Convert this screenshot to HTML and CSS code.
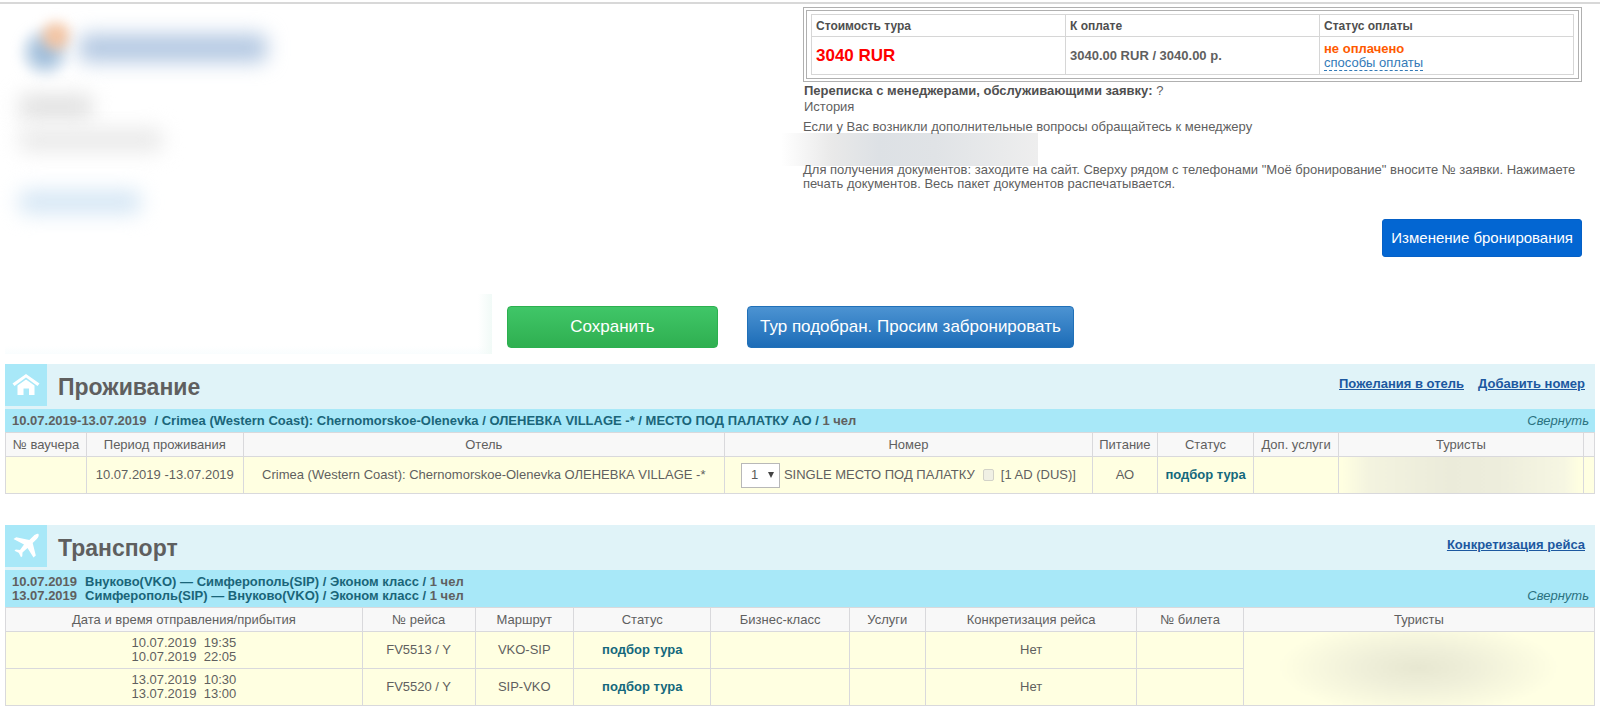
FILE: index.html
```html
<!DOCTYPE html>
<html lang="ru">
<head>
<meta charset="utf-8">
<title>Бронирование</title>
<link rel="stylesheet" href="styles.css">
</head>
<body>
<div class="page">
  <header class="top">
    <div class="agency">
      <div class="logo"><span class="logo-mark"></span><span class="logo-name"></span></div>
      <div class="smudge smudge-a"></div>
      <div class="smudge smudge-b"></div>
      <div class="smudge smudge-link"></div>
    </div>
    <div class="order">
      <div class="pay-box">
        <table class="pay">
          <thead><tr><th>Стоимость тура</th><th>К оплате</th><th>Статус оплаты</th></tr></thead>
          <tbody><tr>
            <td class="cost">3040 RUR</td>
            <td class="due">3040.00 RUR / 3040.00 р.</td>
            <td><div class="unpaid">не оплачено</div><a class="ways" href="#">способы оплаты</a></td>
          </tr></tbody>
        </table>
      </div>
      <div class="talks">
        <div><b>Переписка с менеджерами, обслуживающими заявку:</b> ?</div>
        <div>История</div>
      </div>
      <p class="ask">Если у Вас возникли дополнительные вопросы обращайтесь к менеджеру</p>
      <div class="contact"></div>
      <p>Для получения документов: заходите на сайт. Сверху рядом с телефонами "Моё бронирование" вносите № заявки. Нажимаете печать документов. Весь пакет документов распечатывается.</p>
      <button class="change" type="button">Изменение бронирования</button>
    </div>
  </header>
  <div class="actions">
    <div class="fade"></div>
    <button class="btn save" type="button">Сохранить</button>
    <button class="btn book" type="button">Тур подобран. Просим забронировать</button>
  </div>

  <section class="block">
    <div class="head">
      <span class="icon"><svg width="28" height="24" viewBox="0 0 28 24" fill="#fff"><path d="M14 1 27.500 10.500 25.500 13 14 4.500 2.500 13 .500 10.500Z"/><path d="M14 6.500 22.500 12.500V22H17V15.500H11.500V22H5.500V12.500Z"/></svg></span>
      <h2>Проживание</h2>
      <nav><a href="#">Пожелания в отель</a><a href="#">Добавить номер</a></nav>
    </div>
    <div class="bar">
      <div><span class="grey">10.07.2019-13.07.2019</span><span class="trip">/ Crimea (Western Coast): Chernomorskoe-Olenevka / ОЛЕНЕВКА VILLAGE -* / МЕСТО ПОД ПАЛАТКУ АО / <span class="grey">1 чел</span></span></div>
      <button class="fold" type="button">Свернуть</button>
    </div>
    <table class="grid">
      <colgroup><col class="s1"><col class="s2"><col class="s3"><col class="s4"><col class="s5"><col class="s6"><col class="s7"><col class="s8"><col></colgroup>
      <thead><tr><th>№ ваучера</th><th>Период проживания</th><th>Отель</th><th>Номер</th><th>Питание</th><th>Статус</th><th>Доп. услуги</th><th>Туристы</th><th></th></tr></thead>
      <tbody><tr>
        <td></td>
        <td>10.07.2019 -13.07.2019</td>
        <td>Crimea (Western Coast): Chernomorskoe-Olenevka ОЛЕНЕВКА VILLAGE -*</td>
        <td><div class="room"><span class="pick"><select aria-label="Количество номеров"><option>1</option></select></span><span>SINGLE МЕСТО ПОД ПАЛАТКУ</span><label class="dus"><input type="checkbox" disabled>[1 AD (DUS)]</label></div></td>
        <td>АО</td>
        <td class="status">подбор тура</td>
        <td></td>
        <td class="hidden-a"></td>
        <td></td>
      </tr></tbody>
    </table>
  </section>

  <section class="block">
    <div class="head">
      <span class="icon"><svg width="28" height="26" viewBox="0 0 28 26" fill="#fff"><path d="M26.500 1C25 .400 23 1.600 21.500 3L17.300 7 4.200 4.200 1.500 6 12 11.500 8 17 3.800 16.600 2.500 17.800 6.600 19.800 7 20.300 9 24.300 10.300 23.200 10.500 19.500 15.500 15 21.500 24.500 23.800 22.500 20.700 10 24.800 6C26.300 4.500 27.200 2.500 26.500 1Z"/></svg></span>
      <h2>Транспорт</h2>
      <nav><a href="#">Конкретизация рейса</a></nav>
    </div>
    <div class="bar">
      <div>
        <div><span class="grey">10.07.2019</span><span class="trip">Внуково(VKO) — Симферополь(SIP) / Эконом класс / <span class="grey">1 чел</span></span></div>
        <div><span class="grey">13.07.2019</span><span class="trip">Симферополь(SIP) — Внуково(VKO) / Эконом класс / <span class="grey">1 чел</span></span></div>
      </div>
      <button class="fold" type="button">Свернуть</button>
    </div>
    <table class="grid">
      <colgroup><col class="t1"><col class="t2"><col class="t3"><col class="t4"><col class="t5"><col class="t6"><col class="t7"><col class="t8"><col></colgroup>
      <thead><tr><th>Дата и время отправления/прибытия</th><th>№ рейса</th><th>Маршрут</th><th>Статус</th><th>Бизнес-класс</th><th>Услуги</th><th>Конкретизация рейса</th><th>№ билета</th><th>Туристы</th></tr></thead>
      <tbody>
        <tr><td>10.07.2019 &nbsp;19:35<br>10.07.2019 &nbsp;22:05</td><td>FV5513 / Y</td><td>VKO-SIP</td><td class="status">подбор тура</td><td></td><td></td><td>Нет</td><td></td><td class="hidden-b" rowspan="2"></td></tr>
        <tr><td>13.07.2019 &nbsp;10:30<br>13.07.2019 &nbsp;13:00</td><td>FV5520 / Y</td><td>SIP-VKO</td><td class="status">подбор тура</td><td></td><td></td><td>Нет</td><td></td></tr>
      </tbody>
    </table>
  </section>
</div>
</body>
</html>
```
FILE: styles.css
```css
* { box-sizing: border-box; }
body {
  margin: 0;
  background: #fff;
  color: #5f5f5f;
  font: 13px/14px "Liberation Sans", Arial, sans-serif;
}
button, select, input { font: inherit; }
p, h2 { margin: 0; }
.page { margin-top: 2px; padding: 0 5px; border-top: 2px solid #d8d8d8; }
.top { display: flex; justify-content: space-between; padding-right: 13px; }

.agency { width: 490px; padding: 14px 0 0 14px; }
.logo { display: flex; align-items: center; height: 60px; }
.logo-mark {
  width: 60px; height: 60px; filter: blur(5px);
  background:
    radial-gradient(circle at 37px 18px, #f3c5a4 0 6px, transparent 20px),
    radial-gradient(circle at 26px 34px, #a3c0dc 0 8px, transparent 28px);
}
.logo-name { width: 188px; height: 28px; background: #b3c8e2; border-radius: 8px; filter: blur(10px); }
.smudge { filter: blur(10px); border-radius: 8px; background: #e2e2e2; }
.smudge-a { width: 74px; height: 26px; margin-top: 16px; }
.smudge-b { width: 144px; height: 24px; margin-top: 8px; background: #eaeaea; }
.smudge-link { width: 122px; height: 24px; margin-top: 38px; background: #d6e7f5; }

.order { width: 779px; padding-top: 3px; }
.pay-box { border: 4px double #b0b0b0; padding: 3px 4px; background: #fff; }
.pay { width: 100%; table-layout: fixed; border-collapse: collapse; }
.pay th, .pay td { border: 1px solid #d6d6d6; padding: 0 4px; text-align: left; }
.pay th { height: 22px; font-size: 12px; color: #4f4f4f; }
.pay td { height: 38px; }
.pay .cost { color: #f00; font-size: 17px; font-weight: bold; }
.pay .due { font-weight: bold; }
.unpaid { color: #ff5a00; font-weight: bold; }
.ways { color: #337ab7; text-decoration: none; border-bottom: 1px dashed #337ab7; }
.talks { padding: 1px 0 0 1px; line-height: 16px; }
.talks b { color: #4f4f4f; }
.ask { margin-top: 5px; }
.contact {
  width: 257px; height: 33px; margin: -1px 0 -3px -22px;
  background: linear-gradient(90deg, #fff, #e9e9e9 20%, #dde1e5 38%, #e0e3e6 60%, #eee);
}
.change {
  display: block; height: 38px; margin: 28px 0 0 auto; padding: 0 8px;
  border: 1px solid #0560c6; border-radius: 3px; background: #0366d2; color: #fff; font-size: 15px;
}

.actions { display: flex; align-items: flex-end; height: 90px; margin-top: 7px; }
.fade {
  width: 487px; height: 60px; margin-right: 15px;
  background:
    linear-gradient(270deg, #f1faf7, transparent 14px),
    linear-gradient(0deg, #f9fdfe, transparent 8px);
}
.btn { height: 42px; margin-bottom: 6px; color: #fff; font-size: 17px; border: 1px solid; border-radius: 4px; }
.save { width: 211px; background: linear-gradient(#40c668, #2faf50); border-color: #2cb04f; }
.book { margin-left: 29px; padding: 0 12px; background: linear-gradient(#4c93d2, #1c6cb7); border-color: #2070b8; }

.block { margin-top: 10px; }
.block + .block { margin-top: 31px; }
.head { display: flex; height: 45px; padding-right: 10px; background: #e0f3f8; }
.icon { display: flex; align-items: center; justify-content: center; width: 42px; height: 42px; background: #a8e8f8; }
.head h2 { flex: 1; padding-left: 11px; font-size: 23px; line-height: 46px; }
.head nav { display: flex; gap: 14px; line-height: 40px; font-weight: bold; }
.head a { color: #1c58a0; }
.bar {
  display: flex; justify-content: space-between; align-items: flex-end;
  padding: 5px 6px 4px 7px; background: #a8e8f8; color: #1a6579;
}
.bar > div { font-weight: bold; }
.grey { color: #5f6060; }
.trip { margin-left: 8px; }
.fold { padding: 0; border: 0; background: none; color: #2b7280; font-style: italic; }

.grid { width: 100%; table-layout: fixed; border-collapse: collapse; }
.grid th, .grid td { padding: 0; border: 1px solid #d9d9dc; text-align: center; }
.grid th { height: 24px; background: #f8f8f8; font-weight: normal; }
.grid td { height: 37px; background: #ffffe1; }
.grid .status { color: #14687c; font-weight: bold; }
.s1 { width: 5.1%; } .s2 { width: 9.85%; } .s3 { width: 30.3%; } .s4 { width: 23.15%; } .s5 { width: 4.1%; }
.s6 { width: 6.05%; } .s7 { width: 5.35%; } .s8 { width: 15.4%; }
.t1 { width: 22.45%; } .t2 { width: 7.1%; } .t3 { width: 6.2%; } .t4 { width: 8.65%; } .t5 { width: 8.7%; }
.t6 { width: 4.8%; } .t7 { width: 13.3%; } .t8 { width: 6.7%; }
.room { display: flex; align-items: center; justify-content: center; gap: 4px; }
.pick { position: relative; display: flex; }
.pick::after {
  content: ""; position: absolute; right: 6px; top: 9px;
  border: 3px solid transparent; border-top: 6px solid #444; border-bottom: 0;
}
.pick select { appearance: none; width: 39px; height: 25px; padding: 0 9px; border: 1px solid #b8b8b8; border-radius: 0; background: #fff; color: #5a5a5a; }
.dus { display: flex; align-items: center; gap: 7px; margin-left: 4px; }
.dus input { appearance: none; width: 11px; height: 12px; margin: 0; border: 1px solid #d2d2c8; border-radius: 2px; background: #f0f0e4; }
.grid .hidden-a { background: linear-gradient(90deg, #ffffe1 1%, #f3f3df 12%, #ebebda 45%, #ededdc 65%, #f6f6e2 92%, #ffffe1 99%); }
.grid .hidden-b { background: radial-gradient(ellipse 40% 65% at 50% 48%, #e7e7d1, #efefd9 40%, #ffffe3); }
```
